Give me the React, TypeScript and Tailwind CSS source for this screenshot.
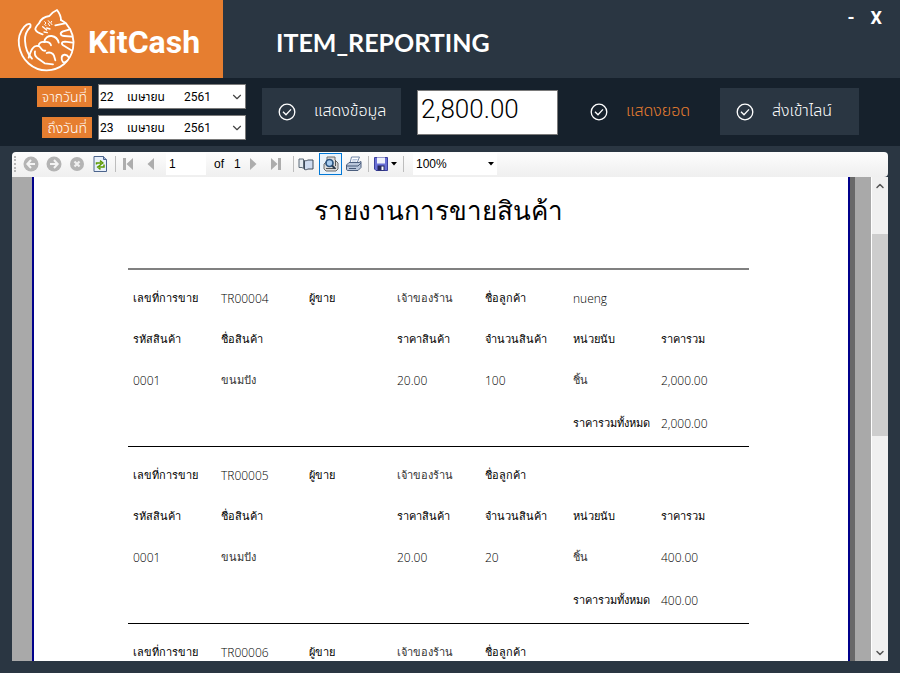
import type { ReactNode } from "react";
import { ChevronDown, ChevronUp } from "lucide-react";

const report = "font-['Open_Sans','Liberation_Sans',sans-serif]";

function CatLogo() {
  return (
    <svg viewBox="0 0 198 210" className="h-[70px] w-[66px] shrink-0" fill="none" stroke="#fff" strokeWidth="5.5" strokeLinecap="round" strokeLinejoin="round" aria-hidden="true">
      <path d="M49 69C53 55 40 58 31 68C17 84 12 104 15 124C22 169 57 199 98 199C139 198 170 171 177 133C182 105 173 78 156 58L141 48" />
      <path d="M49 69C37 81 32 94 33 110C34 132 43 153 54 164" />
      <path d="M141 48C141 38 136 27 129 18C118 23 110 30 106 36C92 38 80 46 75 58C69 64 64 69 64 76C66 84 75 88 86 91" />
      <path d="M44 161C51 138 58 122 73 126C84 130 81 143 94 140M74 126C74 116 83 112 91 114C92 101 103 95 113 96C125 98 132 107 134 116" />
      <path d="M91 114C102 112 109 117 111 124M63 142C61 151 63 156 69 161L92 178L117 181M98 147C107 143 117 147 120 155L124 169" />
      <path d="M124 64L153 58M168 76L147 82C136 87 139 96 151 96L174 98M176 116L153 113C142 113 140 121 151 126L172 139M164 160C157 148 144 151 143 161C142 172 149 180 157 172" />
      <path d="M92 53L96 57L92 61L96 65M103 50L107 55L103 59L107 65M113 52L110 57L114 62" strokeWidth="3" />
      <path d="M86 68L98 78M90 84L100 86M98 72L108 75" strokeWidth="4" />
    </svg>
  );
}

function CheckCircle() {
  return (
    <svg viewBox="0 0 18 18" className="size-[18px] shrink-0" fill="none" stroke="#fff" strokeWidth="1.3" aria-hidden="true">
      <circle cx="9" cy="9" r="7.8" />
      <path d="M5 8.8l3 3 5-5.4" />
    </svg>
  );
}

function DateField({ id, label, day }: { id: string; label: string; day: string }) {
  return (
    <div className="flex items-center justify-end gap-1.5">
      <label htmlFor={id} className="flex h-[21px] items-center bg-[#e67e30] px-[5px] text-sm leading-none font-light text-white">{label}</label>
      <div className="flex h-[25px] w-[148px] items-center border border-[#7a7a7a] bg-white text-xs text-black">
        <input id={id} defaultValue={day} className="w-7 pl-px outline-none" />
        <input aria-label={label + " เดือน"} defaultValue="เมษายน" className="w-14 outline-none" />
        <input aria-label={label + " ปี"} defaultValue="2561" className="w-9 pl-px outline-none" />
        <button aria-label="เลือกวันที่" className="flex flex-1 justify-end pr-px">
          <ChevronDown className="size-3.5 text-[#444]" strokeWidth={2} />
        </button>
      </div>
    </div>
  );
}

function ActionButton({ children, className }: { children: ReactNode; className: string }) {
  return (
    <button className={"mb-0.5 flex h-[47px] w-[139px] items-center gap-[18px] pl-4 text-base font-light whitespace-nowrap " + className}>
      <span className="pt-0.5"><CheckCircle /></span>
      <span>{children}</span>
    </button>
  );
}

function Tool({ label, children, className = "" }: { label: string; children: ReactNode; className?: string }) {
  return (
    <button aria-label={label} className={"flex h-[22px] w-[23px] shrink-0 items-center justify-center " + className}>
      <svg viewBox="0 0 16 16" className="size-4" aria-hidden="true">{children}</svg>
    </button>
  );
}

function Separator() {
  return <span className="h-4 w-px shrink-0 bg-[#bdbdbd]" />;
}

function Toolbar() {
  return (
    <div className="flex h-[25px] shrink-0 items-center rounded-t-sm rounded-br-sm bg-linear-to-b from-[#fdfdfd] to-[#efefef] pb-0.5 font-['Liberation_Sans',sans-serif] text-xs text-black">
      <span className="mr-[3px] ml-0.5 h-4 w-0.5 shrink-0 border-l-2 border-dotted border-[#b8b8b8]" />
      <Tool label="Back">
        <circle cx="8" cy="8" r="7.5" fill="#b4b4b4" />
        <path d="M12 8H4.5M8 4L4.3 8L8 12" fill="none" stroke="#f4f4f4" strokeWidth="2" />
      </Tool>
      <Tool label="Forward">
        <circle cx="8" cy="8" r="7.5" fill="#b4b4b4" />
        <path d="M4 8h7.5M8 4l3.7 4L8 12" fill="none" stroke="#f4f4f4" strokeWidth="2" />
      </Tool>
      <Tool label="Stop">
        <circle cx="8" cy="8" r="7" fill="#b4b4b4" />
        <path d="M5.5 5.5l5 5M10.500 5.500l-5 5" stroke="#f0f0f0" strokeWidth="2.2" />
      </Tool>
      <Tool label="Refresh">
        <path d="M2 .5h9.500l3 3v12H2z" fill="#e8f0fb" stroke="#4c648c" />
        <path d="M11.500.500v3h3" fill="#9fb4d4" stroke="#4c648c" />
        <path d="M4.500 8.500V7H9M8 4.700l2.800 2.300L8 9M12 8.500V11H7.500M8.500 9l-2.800 2 2.800 2.300" fill="none" stroke="#5c9a00" strokeWidth="1.500" />
      </Tool>
      <span className="w-1 shrink-0" />
      <Separator />
      <Tool label="First page">
        <path d="M3 2h3v12H3zM13 2v12L6.500 8z" fill="#adadad" />
      </Tool>
      <Tool label="Previous page">
        <path d="M11 2v12L4.500 8z" fill="#adadad" />
      </Tool>
      <input aria-label="Current page" defaultValue="1" className="ml-1 h-[22px] w-10 shrink-0 bg-white pl-[3px] outline-none" />
      <span className="box-content w-5 shrink-0 pl-2">of</span>
      <span className="w-[7px] shrink-0">1</span>
      <Tool label="Next page">
        <path d="M5 2v12L11.500 8z" fill="#adadad" />
      </Tool>
      <Tool label="Last page">
        <path d="M10 2h3v12h-3zM3 2v12L9.500 8z" fill="#adadad" />
      </Tool>
      <span className="w-[6px] shrink-0" />
      <Separator />
      <Tool label="Document map" className="mr-0.5">
        <path d="M1 3h4.500v9.500L4 11.500H1z" fill="#e4eaf0" stroke="#5d6b78" />
        <path d="M6.500 4.500c1.500.500 2.500 0 3.500-.500h5V13h-5c-1 .500-2 1-3.500.500z" fill="#cfdcf0" stroke="#3e4a5a" />
      </Tool>
      <Tool label="Print layout" className="border border-[#0078d7] bg-[#eaf3fb]">
        <path d="M4 1h8v3l3 3v6l-2 2H3l-2-2V8l3-3z" fill="#dcdcdc" stroke="#6b6b6b" />
        <path d="M12.500 4v6M3 12.500h10" fill="none" stroke="#555" />
        <circle cx="6.500" cy="7" r="3.500" fill="#a9cdf0" stroke="#2c5580" strokeWidth="1.700" />
        <path d="M9 9.500l3 3" stroke="#2b3d52" strokeWidth="2" />
      </Tool>
      <Tool label="Print">
        <path d="M5.500 1h8L11 7H4z" fill="#fff" stroke="#7086a8" />
        <path d="M3 6.500h10l2-1v6l-3 3H2c-1 0-1.500-.500-1.500-1.500V9z" fill="#b9c6da" stroke="#4c5f7e" />
        <path d="M1 10h11l3-3M3 12.500h7" fill="none" stroke="#465a78" />
        <path d="M6.500 3.500h5M6 5h4.500" stroke="#9fb4d4" strokeWidth=".8" />
      </Tool>
      <span className="w-[3px] shrink-0" />
      <Separator />
      <button aria-label="Export" className="mr-1 ml-1 flex w-[26px] shrink-0 items-center gap-0.5">
        <svg viewBox="0 0 16 16" className="size-4 shrink-0" aria-hidden="true">
          <path d="M1.500 1.500h13v13H3l-1.500-1.500z" fill="#6a70d6" stroke="#3a3f9c" />
          <path d="M4 1.500h8V7.500H4z" fill="#eef1fb" />
          <path d="M4.500 9.500h7v5h-7z" fill="#25285f" />
          <path d="M8.500 10.500h2v3.500h-2z" fill="#fff" />
        </svg>
        <svg viewBox="0 0 6 4" className="h-1 w-1.5 shrink-0" aria-hidden="true"><path d="M0 0h6L3 3.500z" /></svg>
      </button>
      <Separator />
      <div className="ml-[9px] flex h-[22px] w-[84px] shrink-0 items-center bg-white pr-[3px]">
        <select aria-label="Zoom" className="w-full appearance-none pl-[3px] outline-none">
          <option>100%</option>
        </select>
        <svg viewBox="0 0 6 4" className="h-1 w-1.5 shrink-0" aria-hidden="true"><path d="M0 0h6L3 3.500z" /></svg>
      </div>
    </div>
  );
}

type Line = { qty: string; total: string };
type Sale = { no: string; customer: string; line?: Line };

const sales: Sale[] = [
  { no: "TR00004", customer: "nueng", line: { qty: "100", total: "2,000.00" } },
  { no: "TR00005", customer: "", line: { qty: "20", total: "400.00" } },
  { no: "TR00006", customer: "" },
];

const headers = ["รหัสสินค้า", "ชื่อสินค้า", "", "ราคาสินค้า", "จำนวนสินค้า", "หน่วยนับ", "ราคารวม"];

function Head({ children }: { children?: ReactNode }) {
  return <th className="p-0 pl-[5px] text-left text-[11px] font-medium">{children}</th>;
}

function Cell({ children, className = "text-xs" }: { children?: ReactNode; className?: string }) {
  return <td className={"p-0 pl-[5px] font-light " + className}>{children}</td>;
}

const thai = "text-[11px] text-[#333]";

function SaleTable({ sale }: { sale: Sale }) {
  return (
    <table className="w-full table-fixed border-separate border-spacing-0 border-t border-black pt-2 whitespace-nowrap first-of-type:border-t-2 first-of-type:border-[#808080]">
      <tbody>
        <tr className="h-[41px]">
          <Head>เลขที่การขาย</Head><Cell>{sale.no}</Cell>
          <Head>ผู้ขาย</Head><Cell className={thai}>เจ้าของร้าน</Cell>
          <Head>ชื่อลูกค้า</Head><Cell>{sale.customer}</Cell><Cell className="w-[93px]" />
        </tr>
        {sale.line && (
          <>
            <tr className="h-[41px]">{headers.map((h, i) => <Head key={i}>{h}</Head>)}</tr>
            <tr className="h-[41px]">
              <Cell>0001</Cell><Cell className={thai}>ขนมปัง</Cell><Cell /><Cell>20.00</Cell>
              <Cell>{sale.line.qty}</Cell><Cell className={thai}>ชิ้น</Cell><Cell>{sale.line.total}</Cell>
            </tr>
            <tr className="h-[45px]">
              <Cell /><Cell /><Cell /><Cell /><Cell />
              <Head>ราคารวมทั้งหมด</Head><Cell>{sale.line.total}</Cell>
            </tr>
          </>
        )}
      </tbody>
    </table>
  );
}

export default function App() {
  return (
    <div className="flex h-screen flex-col overflow-hidden bg-[#2a3642] font-['Roboto','Noto_Sans_Thai',sans-serif]">
      <header className="flex h-[78px] shrink-0 text-white">
        <div className="flex w-[223px] shrink-0 items-center gap-2 bg-[#e67e30] pl-3.5">
          <CatLogo />
          <span className="pt-1.5 text-[32px] leading-none font-bold">KitCash</span>
        </div>
        <h1 className="flex-1 self-center pt-2 pl-[53px] font-['Lato',sans-serif] text-[25px] font-bold">ITEM_REPORTING</h1>
        <div className="flex items-start gap-4 pt-1 pr-[18px] text-lg font-bold">
          <button aria-label="Minimize">-</button>
          <button aria-label="Close">X</button>
        </div>
      </header>

      <section className="flex h-[68px] shrink-0 items-center bg-[#16212c] pl-9 text-white">
        <div className="flex w-[210px] shrink-0 flex-col gap-1.5">
          <DateField id="from" label="จากวันที่" day="22" />
          <DateField id="to" label="ถึงวันที่" day="23" />
        </div>
        <ActionButton className="ml-4 bg-[#2a3642]">แสดงข้อมูล</ActionButton>
        <input aria-label="ยอดรวม" defaultValue="2,800.00" className="mx-4 h-[45px] w-[141px] border border-[#7a7a7a] bg-white pb-1.5 pl-[3px] text-[26px] font-light text-black outline-none" />
        <ActionButton className="text-[#e67e30]">แสดงยอด</ActionButton>
        <ActionButton className="ml-[7px] bg-[#2a3642]">ส่งเข้าไลน์</ActionButton>
      </section>

      <main className={"mx-3 mt-1.5 mb-3 flex min-h-0 flex-1 flex-col text-black " + report}>
        <Toolbar />
        <div className="flex min-h-0 flex-1">
          <div className="flex flex-1 overflow-hidden bg-[#a9a9a9] pr-4 pl-5">
            <div className="flex-1 border-x-2 border-[#00008b] bg-white pr-[99px] pl-[94px]">
              <h2 className="h-[91px] pt-3.5 text-center text-[26px] font-medium">รายงานการขายสินค้า</h2>
              {sales.map((sale) => <SaleTable key={sale.no} sale={sale} />)}
            </div>
            <div className="w-[5px] bg-[#696969]" />
          </div>
          <div className="flex w-[17px] shrink-0 flex-col border-l border-white bg-[#f0f0f0] text-[#555]">
            <button aria-label="Scroll up" className="flex h-[17px] items-center justify-center"><ChevronUp className="size-3" strokeWidth={3} /></button>
            <div className="flex-[40]" />
            <div className="flex-[202] bg-[#cdcdcd]" />
            <div className="flex-[208]" />
            <button aria-label="Scroll down" className="flex h-[17px] items-center justify-center"><ChevronDown className="size-3" strokeWidth={3} /></button>
          </div>
        </div>
      </main>
    </div>
  );
}
